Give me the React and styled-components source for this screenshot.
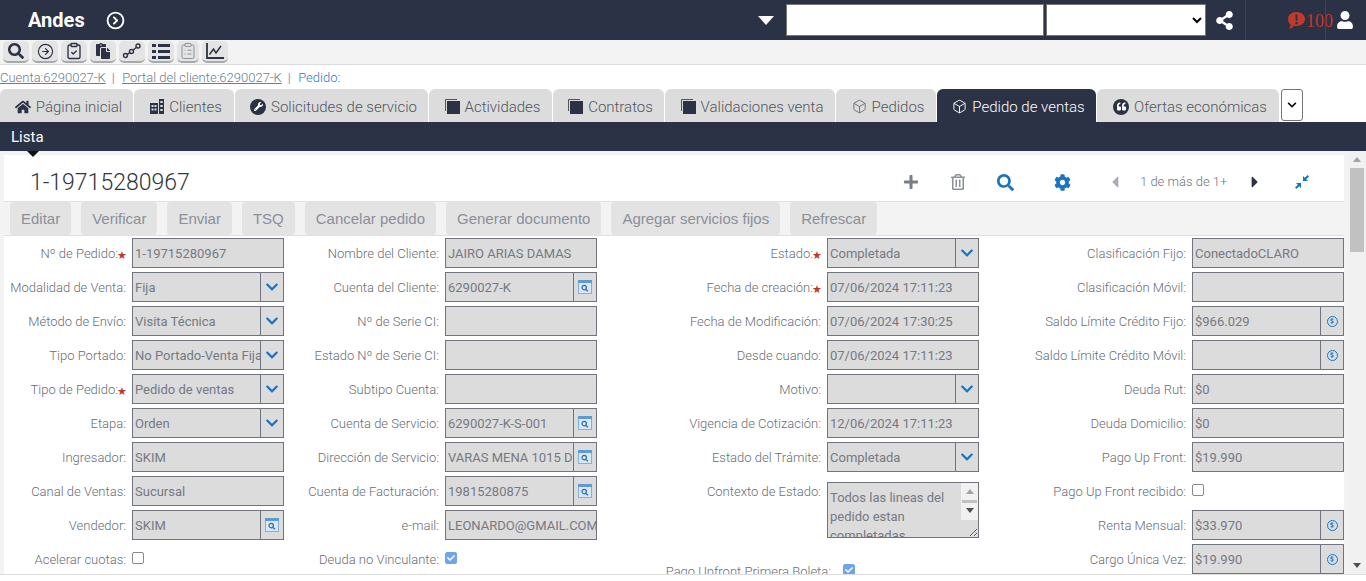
import React from 'react';
import styled, { createGlobalStyle } from 'styled-components';
import {
  FaSearch, FaPaste, FaHome, FaWrench, FaQuoteLeft, FaPlus, FaRegTrashAlt, FaCog,
  FaShareAlt, FaUser, FaCaretLeft, FaCaretRight, FaCheck, FaChevronDown, FaDollarSign,
} from 'react-icons/fa';
import { LuCircleArrowRight, LuClipboardCheck, LuClipboardList, LuBox, LuCircleChevronRight } from 'react-icons/lu';

const GlobalStyle = createGlobalStyle`
  html, body {
    margin: 0;
    padding: 0;
    height: 581px;
    overflow: hidden;
    background: #fff;
    font-family: Roboto, "Liberation Sans", sans-serif;
  }
  * { box-sizing: border-box; }
`;

const dark = '#2b3245';
const blue = '#1a74c4';

const Page = styled.div`
  width: 1366px;
  height: 581px;
  display: flex;
  flex-direction: column;
  overflow: hidden;
`;

/* top bar */
const TopBar = styled.header`
  height: 40px;
  flex: none;
  background: ${dark};
  display: flex;
  align-items: center;
  color: #fff;
`;

const Brand = styled.div`
  margin-left: 28px;
  width: 78px;
  font-size: 20px;
  font-weight: 700;
`;

const BrandGo = styled.div`
  display: flex;
  font-size: 19px;
`;

const Caret = styled.div`
  margin-left: auto;
  width: 0;
  height: 0;
  border-left: 8px solid transparent;
  border-right: 8px solid transparent;
  border-top: 9px solid #fff;
`;

const SearchBox = styled.input`
  margin-left: 12px;
  width: 258px;
  height: 32px;
  background: #fff;
  border: 1px solid #767676;
`;

const ScopeSelect = styled.select`
  margin-left: 2px;
  width: 160px;
  height: 32px;
  background: #fff;
  border: 1px solid #767676;
`;

const ShareBtn = styled.div`
  display: flex;
  margin-left: 9px;
  margin-right: 11px;
  font-size: 19px;
`;

const AlertCell = styled.div`
  width: 80px;
  height: 40px;
  flex: none;
  padding-left: 41px;
  display: flex;
  align-items: center;
  border-left: 1px solid #3f4658;
  white-space: nowrap;
  & > svg { flex: none; }
`;

const AlertCount = styled.span`
  font-family: "Liberation Serif", serif;
  font-size: 18px;
  color: #c0392b;
  padding-top: 3px;
  flex: none;
`;

const UserCell = styled.div`
  width: 41px;
  height: 40px;
  flex: none;
  padding-left: 10px;
  display: flex;
  align-items: center;
  border-left: 1px solid #3f4658;
  font-size: 18px;
`;

/* icon toolbar */
const IconBar = styled.div`
  height: 25px;
  flex: none;
  display: flex;
  gap: 3px;
  padding: 1px 0 0 3px;
  background: #f3f3f3;
  border-bottom: 1px solid #dcdcdc;
`;

const ToolBtn = styled.button`
  width: ${p => p.$w || 26}px;
  height: 22px;
  padding: 0;
  display: flex;
  align-items: center;
  justify-content: center;
  background: #e4e4e4;
  border: none;
  border-bottom: 2px solid #a9a9a9;
  border-radius: 5px;
  color: ${p => p.$color || dark};
  font-size: 16px;
`;

/* breadcrumb */
const Crumbs = styled.div`
  height: 24px;
  flex: none;
  display: flex;
  align-items: center;
  font-size: 13px;
  font-weight: 300;
  color: #6f7b8e;
`;

const Crumb = styled.a`
  color: ${p => (p.$current ? '#2f7cc4' : '#6f7b8e')};
  text-decoration: ${p => (p.$current ? 'none' : 'underline')};
`;

const Sep = styled.span`
  margin: 0 7.5px 0 6px;
  color: #3d6ea5;
`;

/* tabs */
const Tabs = styled.nav`
  height: 33px;
  flex: none;
  display: flex;
  gap: 1px;
`;

const Tab = styled.div`
  width: ${p => p.$w}px;
  display: flex;
  align-items: center;
  justify-content: center;
  gap: 5px;
  font-size: 15px;
  font-weight: 300;
  padding: 2px 0 0 4px;
  white-space: nowrap;
  background: ${p => (p.$active ? dark : '#dcdcdc')};
  color: ${p => (p.$active ? '#fff' : '#51565f')};
  border-radius: 6px 6px 0 0;
`;

const TabIcon = styled.span`
  display: flex;
  font-size: 15px;
  flex: none;
  color: ${p => (p.$active ? '#fff' : p.$muted ? '#6b7079' : dark)};
`;

const MoreTabs = styled.div`
  width: 22px;
  height: 32px;
  margin-left: 1px;
  display: flex;
  align-items: center;
  justify-content: center;
  font-size: 10px;
  color: #111;
  background: #fff;
  border: 1px solid #767676;
  border-radius: 3px;
`;

const SubBar = styled.div`
  position: relative;
  height: 29px;
  flex: none;
  padding-left: 11px;
  background: ${dark};
  color: #fff;
  font-size: 15px;
  line-height: 30px;
`;

const Pointer = styled.div`
  position: absolute;
  left: 27px;
  top: 29px;
  z-index: 2;
  border-left: 6px solid transparent;
  border-right: 6px solid transparent;
  border-top: 6px solid #111;
`;

/* work area */
const Work = styled.main`
  height: 424px;
  flex: none;
  display: flex;
  background: #f3f3f3;
  border-bottom: 1px solid #dedede;
`;

const Panel = styled.section`
  width: 1340px;
  margin: 4px 0 0 4px;
  flex: none;
  display: flex;
  flex-direction: column;
  background: #fff;
  overflow: hidden;
`;

const Scrollbar = styled.div`
  width: 18px;
  margin-left: 4px;
  flex: none;
  display: flex;
  flex-direction: column;
  align-items: center;
  background: #f1f1f1;
  padding-top: 6px;
`;

const ScrollUp = styled.div`
  flex: none;
  border-left: 4px solid transparent;
  border-right: 4px solid transparent;
  border-bottom: 5px solid #a3a3a3;
`;

const ScrollThumb = styled.div`
  flex: none;
  width: 14px;
  height: 84px;
  margin-top: 6px;
  background: #c1c1c1;
`;

const ScrollDown = styled.div`
  flex: none;
  margin-top: auto;
  margin-bottom: 6px;
  border-left: 4px solid transparent;
  border-right: 4px solid transparent;
  border-top: 5px solid #505050;
`;

const RecordHead = styled.div`
  height: 47px;
  flex: none;
  display: flex;
  align-items: center;
  padding-top: 8px;
  border-bottom: 1px solid #e0e0e0;
`;

const RecordTitle = styled.h1`
  margin: 0 0 0 26px;
  font-size: 23px;
  font-weight: 300;
  color: #30363f;
`;

const HeadTools = styled.div`
  margin-left: auto;
  display: flex;
  align-items: center;
  height: 100%;
`;

const HeadTool = styled.span`
  width: ${p => p.$w}px;
  display: flex;
  justify-content: center;
  color: ${p => p.$color};
  font-size: ${p => p.$size || 16}px;
`;

const Pager = styled.span`
  width: 87px;
  margin: 0 14px 2px 11px;
  font-size: 13px;
  font-weight: 300;
  color: #70757f;
  white-space: nowrap;
`;

const Actions = styled.div`
  height: 34px;
  flex: none;
  display: flex;
  gap: 10px;
  padding-left: 6px;
  background: #f3f3f3;
  border-bottom: 1px solid #e0e0e0;
`;

const ActionBtn = styled.button`
  height: 33px;
  padding: 0 11px;
  border: none;
  border-radius: 4px;
  background: #e3e3e3;
  color: #8b8f99;
  font-family: "Liberation Sans", sans-serif;
  font-size: 15px;
`;

const Form = styled.div`
  flex: 1;
  min-height: 0;
  display: flex;
  padding-top: 2px;
  overflow: hidden;
`;

const Column = styled.div`
  width: ${p => p.$w}px;
  flex: none;
  display: flex;
  flex-direction: column;
`;

const Field = styled.div`
  height: ${p => p.$h || 34}px;
  flex: none;
  display: flex;
  justify-content: flex-end;
  gap: ${p => p.$gap || 6}px;
  padding-top: ${p => p.$top || 0}px;
`;

const Label = styled.label`
  font-size: 13px;
  font-weight: 300;
  line-height: 31px;
  color: #686d77;
  white-space: nowrap;
`;

const Star = styled.span`
  font-size: 11px;
  color: #c0392b;
  margin: 0 -1px;
  vertical-align: -1px;
`;

const Control = styled.div`
  width: 152px;
  height: 30px;
  flex: none;
  display: flex;
  background: #dcdcdc;
  border: 1px solid #6f7480;
`;

const Value = styled.input`
  flex: 1;
  min-width: 0;
  height: 100%;
  padding: 0 0 0 2px;
  border: none;
  background: transparent;
  outline: none;
  font-family: inherit;
  font-size: 13px;
  color: #757983;
`;

const Suffix = styled.span`
  width: 23px;
  flex: none;
  display: flex;
  align-items: center;
  justify-content: center;
  border-left: 1px solid #6f7480;
  color: ${blue};
  font-size: 14px;
`;

const MoneyDot = styled.span`
  width: 11px;
  height: 11px;
  display: flex;
  align-items: center;
  justify-content: center;
  border: 1px solid ${blue};
  border-radius: 50%;
  font-size: 6px;
`;

const TextFrame = styled.div`
  position: relative;
  width: 152px;
  height: 56px;
  flex: none;
  margin-top: 6px;
`;

const TextBlock = styled.textarea`
  display: block;
  width: 152px;
  height: 56px;
  padding: 5px 19px 0 2px;
  background: #dcdcdc;
  border: 1px solid #6f7480;
  border-radius: 0;
  outline: none;
  overflow: hidden;
  resize: both;
  font-family: inherit;
  font-size: 13px;
  line-height: 19px;
  color: #757983;
`;

/* the textarea's own scrollbar, laid over its right edge */
const TextScroll = styled.div`
  position: absolute;
  top: 1px;
  right: 1px;
  width: 17px;
  height: 37px;
  display: flex;
  flex-direction: column;
  align-items: center;
  padding-top: 6px;
  background: #f1f1f1;
`;

const TextScrollThumb = styled.div`
  width: 15px;
  height: 3px;
  margin-top: 6px;
  background: #c1c1c1;
`;

const TextScrollDown = styled.div`
  margin-top: 5px;
  border-left: 4px solid transparent;
  border-right: 4px solid transparent;
  border-top: 5px solid #505050;
`;

const CheckWrap = styled.div`
  width: ${p => p.$w || 152}px;
  height: 30px;
  flex: none;
  display: flex;
  align-items: center;
  padding-bottom: 2px;
`;

const Check = styled.span`
  width: 12px;
  height: 12px;
  display: flex;
  align-items: center;
  justify-content: center;
  border-radius: 2px;
  border: 1px solid ${p => (p.$on ? '#6ea5ec' : '#8a8a8a')};
  background: ${p => (p.$on ? '#6ea5ec' : '#fff')};
  color: #fff;
  font-size: 8px;
`;

const RoundIcon = styled.span`
  width: 16px;
  height: 16px;
  display: flex;
  align-items: center;
  justify-content: center;
  border-radius: 50%;
  background: ${dark};
  color: #fff;
  font-size: 9px;
`;

const Cube = () => <LuBox size={15} strokeWidth={1.5} />;

const Stack = () => (
  <svg width="15" height="15" viewBox="0 0 15 15">
    <path d="M0.5 12V0.5H12" fill="none" stroke="#555" strokeWidth="1" />
    <rect x="2" y="2" width="13" height="13" fill={dark} />
  </svg>
);

const Building = () => (
  <svg width="14" height="15" viewBox="0 0 14 15" fill={dark}>
    <path fillRule="evenodd" d="M0 4h8v11H0zM1.500 6v2h2V6zm3 0v2h2V6zm-3 3.500v2h2v-2zm3 0v2h2v-2zM9 0h5v15H9zm1.300 2v2h2.400V2zm0 4v2h2.400V6zm0 4v2h2.400v-2z" />
  </svg>
);

const NodesIcon = () => (
  <svg width="20" height="16" viewBox="0 0 20 16" fill="none" stroke={dark} strokeWidth="1.4">
    <circle cx="3.5" cy="12.5" r="2" />
    <circle cx="9.5" cy="8.5" r="2" />
    <circle cx="16" cy="3" r="2" />
    <path d="M5.200 11.300 7.800 9.600M11 7.200 14.500 4.300" />
  </svg>
);

const ListIcon = () => (
  <svg width="18" height="15" viewBox="0 0 18 15" fill={dark}>
    <path d="M0 0h4v3H0zM6 0h12v3H6zM0 6h4v3H0zM6 6h12v3H6zM0 12h4v3H0zM6 12h12v3H6z" />
  </svg>
);

const ChartIcon = () => (
  <svg width="18" height="16" viewBox="0 0 18 16" fill="none" stroke={dark} strokeWidth="1.8">
    <path d="M1 0v15h17" />
    <path d="M3.500 11.500 7.500 6l2.500 4 5-7" strokeWidth="1.5" />
  </svg>
);

const LookupIcon = () => (
  <svg width="14" height="14" viewBox="0 0 14 14">
    <rect x="0.5" y="0.5" width="13" height="13" fill="#d8e8f6" stroke="#7fb2de" />
    <rect x="0" y="0" width="14" height="3" fill="#5c9bd3" />
    <circle cx="6.2" cy="7.6" r="2.2" fill="none" stroke="#2f6fa8" strokeWidth="1.2" />
    <path d="M8 9.400 10 11.200" stroke="#2f6fa8" strokeWidth="1.3" />
  </svg>
);

const AlertIcon = () => (
  <svg width="19" height="19" viewBox="0 0 19 19">
    <path d="M9.500 1C14.500 1 18 4 18 8s-3.500 7-8.500 7c-.8 0-1.500-.1-2.200-.2C6 16.300 4 17.500 2 18c.8-1 1.500-2.500 1.600-4.200C1.900 12.400 1 10.300 1 8c0-4 3.500-7 8.500-7z" fill="#c0392b" />
    <path d="M8.400 3.500h2.200l-.4 6.500H8.800zM8.400 11h2.200v2.200H8.400z" fill={dark} />
  </svg>
);

const CompressIcon = () => (
  <svg width="14" height="14" viewBox="0 0 14 14" fill={blue}>
    <path d="M8 6V1l1.800 1.800L12.600 0 14 1.400l-2.800 2.800L13 6zM6 8v5l-1.800-1.800L1.400 14 0 12.600l2.800-2.800L1 8z" />
  </svg>
);

const toolButtons = [
  { icon: <FaSearch /> },
  { icon: <LuCircleArrowRight size={17} strokeWidth={1.6} /> },
  { icon: <LuClipboardCheck size={18} strokeWidth={1.8} /> },
  { icon: <FaPaste /> },
  { icon: <NodesIcon /> },
  { icon: <ListIcon /> },
  { icon: <LuClipboardList size={18} strokeWidth={1.3} />, w: 22, color: '#8a8f98' },
  { icon: <ChartIcon /> },
];

const tabs = [
  { label: 'Página inicial', w: 133, icon: <FaHome size={16} /> },
  { label: 'Clientes', w: 100, icon: <Building /> },
  { label: 'Solicitudes de servicio', w: 193, icon: <RoundIcon><FaWrench /></RoundIcon> },
  { label: 'Actividades', w: 123, icon: <Stack /> },
  { label: 'Contratos', w: 111, icon: <Stack /> },
  { label: 'Validaciones venta', w: 170, icon: <Stack /> },
  { label: 'Pedidos', w: 100, icon: <Cube />, muted: true },
  { label: 'Pedido de ventas', w: 159, icon: <Cube />, active: true },
  { label: 'Ofertas económicas', w: 182, icon: <RoundIcon><FaQuoteLeft /></RoundIcon> },
];

const actions = ['Editar', 'Verificar', 'Enviar', 'TSQ', 'Cancelar pedido', 'Generar documento', 'Agregar servicios fijos', 'Refrescar'];

const columns = [
  {
    w: 280,
    fields: [
      { label: 'Nº de Pedido:', value: '1-19715280967', required: true },
      { label: 'Modalidad de Venta:', value: 'Fija', kind: 'select' },
      { label: 'Método de Envío:', value: 'Visita Técnica', kind: 'select' },
      { label: 'Tipo Portado:', value: 'No Portado-Venta Fija', kind: 'select' },
      { label: 'Tipo de Pedido:', value: 'Pedido de ventas', kind: 'select', required: true },
      { label: 'Etapa:', value: 'Orden', kind: 'select' },
      { label: 'Ingresador:', value: 'SKIM' },
      { label: 'Canal de Ventas:', value: 'Sucursal' },
      { label: 'Vendedor:', value: 'SKIM', kind: 'lookup' },
      { label: 'Acelerar cuotas:', kind: 'check' },
    ],
  },
  {
    w: 313,
    fields: [
      { label: 'Nombre del Cliente:', value: 'JAIRO ARIAS DAMAS' },
      { label: 'Cuenta del Cliente:', value: '6290027-K', kind: 'lookup' },
      { label: 'Nº de Serie CI:', value: '' },
      { label: 'Estado Nº de Serie CI:', value: '' },
      { label: 'Subtipo Cuenta:', value: '' },
      { label: 'Cuenta de Servicio:', value: '6290027-K-S-001', kind: 'lookup' },
      { label: 'Dirección de Servicio:', value: 'VARAS MENA 1015 DEPTO', kind: 'lookup' },
      { label: 'Cuenta de Facturación:', value: '19815280875', kind: 'lookup' },
      { label: 'e-mail:', value: 'LEONARDO@GMAIL.COM' },
      { label: 'Deuda no Vinculante:', kind: 'check', on: true },
    ],
  },
  {
    w: 382,
    fields: [
      { label: 'Estado:', value: 'Completada', kind: 'select', required: true },
      { label: 'Fecha de creación:', value: '07/06/2024 17:11:23', required: true },
      { label: 'Fecha de Modificación:', value: '07/06/2024 17:30:25' },
      { label: 'Desde cuando:', value: '07/06/2024 17:11:23' },
      { label: 'Motivo:', value: '', kind: 'select' },
      { label: 'Vigencia de Cotización:', value: '12/06/2024 17:11:23' },
      { label: 'Estado del Trámite:', value: 'Completada', kind: 'select' },
      { label: 'Contexto de Estado:', value: 'Todos las lineas del pedido estan completadas', kind: 'text' },
      { label: 'Pago Upfront Primera Boleta:', kind: 'check', on: true, wide: true },
    ],
  },
  {
    w: 365,
    fields: [
      { label: 'Clasificación Fijo:', value: 'ConectadoCLARO' },
      { label: 'Clasificación Móvil:', value: '' },
      { label: 'Saldo Límite Crédito Fijo:', value: '$966.029', kind: 'money' },
      { label: 'Saldo Límite Crédito Móvil:', value: '', kind: 'money' },
      { label: 'Deuda Rut:', value: '$0' },
      { label: 'Deuda Domicilio:', value: '$0' },
      { label: 'Pago Up Front:', value: '$19.990' },
      { label: 'Pago Up Front recibido:', kind: 'check' },
      { label: 'Renta Mensual:', value: '$33.970', kind: 'money' },
      { label: 'Cargo Única Vez:', value: '$19.990', kind: 'money' },
    ],
  },
];

const FieldLabel = ({ field }) => (
  <Label>
    {field.label}
    {field.required && <Star>★</Star>}
  </Label>
);

const suffixFor = (kind) => {
  if (kind === 'select') return <FaChevronDown />;
  if (kind === 'lookup') return <LookupIcon />;
  if (kind === 'money') return <MoneyDot><FaDollarSign /></MoneyDot>;
  return null;
};

const FormField = ({ field }) => {
  if (field.kind === 'text') {
    return (
      <Field $h={68}>
        <FieldLabel field={field} />
        <TextFrame>
          <TextBlock readOnly defaultValue={field.value} />
          <TextScroll>
            <ScrollUp />
            <TextScrollThumb />
            <TextScrollDown />
          </TextScroll>
        </TextFrame>
      </Field>
    );
  }
  if (field.kind === 'check') {
    return (
      <Field $gap={field.wide ? 12 : 6} $top={field.wide ? 12 : 0} $h={field.wide ? 46 : 34}>
        <FieldLabel field={field} />
        <CheckWrap $w={field.wide ? 136 : 152}>
          <Check $on={field.on}>{field.on && <FaCheck />}</Check>
        </CheckWrap>
      </Field>
    );
  }
  const suffix = suffixFor(field.kind);
  return (
    <Field>
      <FieldLabel field={field} />
      <Control>
        <Value readOnly defaultValue={field.value} />
        {suffix && <Suffix>{suffix}</Suffix>}
      </Control>
    </Field>
  );
};

const App = () => (
  <Page>
    <GlobalStyle />
    <TopBar>
      <Brand>Andes</Brand>
      <BrandGo><LuCircleChevronRight size={19} strokeWidth={2.4} /></BrandGo>
      <Caret />
      <SearchBox />
      <ScopeSelect><option /></ScopeSelect>
      <ShareBtn><FaShareAlt /></ShareBtn>
      <AlertCell>
        <AlertIcon />
        <AlertCount>100</AlertCount>
      </AlertCell>
      <UserCell><FaUser /></UserCell>
    </TopBar>

    <IconBar>
      {toolButtons.map((b, i) => (
        <ToolBtn key={i} $w={b.w} $color={b.color}>{b.icon}</ToolBtn>
      ))}
    </IconBar>

    <Crumbs>
      <Crumb>Cuenta:6290027-K</Crumb>
      <Sep>|</Sep>
      <Crumb>Portal del cliente:6290027-K</Crumb>
      <Sep>|</Sep>
      <Crumb $current>Pedido:</Crumb>
    </Crumbs>

    <Tabs>
      {tabs.map(t => (
        <Tab key={t.label} $w={t.w} $active={t.active}>
          <TabIcon $active={t.active} $muted={t.muted}>{t.icon}</TabIcon>
          {t.label}
        </Tab>
      ))}
      <MoreTabs><FaChevronDown /></MoreTabs>
    </Tabs>

    <SubBar>
      Lista
      <Pointer />
    </SubBar>

    <Work>
      <Panel>
        <RecordHead>
          <RecordTitle>1-19715280967</RecordTitle>
          <HeadTools>
            <HeadTool $w={36} $color="#777d88" $size={16}><FaPlus /></HeadTool>
            <HeadTool $w={58} $color="#8a8f98" $size={16}><FaRegTrashAlt /></HeadTool>
            <HeadTool $w={36} $color={blue} $size={17}><FaSearch /></HeadTool>
            <HeadTool $w={78} $color={blue} $size={17}><FaCog /></HeadTool>
            <HeadTool $w={28} $color="#a9adb4" $size={18}><FaCaretLeft /></HeadTool>
            <Pager>1 de más de 1+</Pager>
            <HeadTool $w={28} $color={dark} $size={18}><FaCaretRight /></HeadTool>
            <HeadTool $w={66} $color={blue}><CompressIcon /></HeadTool>
            <HeadTool $w={9} />
          </HeadTools>
        </RecordHead>
        <Actions>
          {actions.map(a => <ActionBtn key={a}>{a}</ActionBtn>)}
        </Actions>
        <Form>
          {columns.map((c, i) => (
            <Column key={i} $w={c.w}>
              {c.fields.map(f => <FormField key={f.label} field={f} />)}
            </Column>
          ))}
        </Form>
      </Panel>
      <Scrollbar>
        <ScrollUp />
        <ScrollThumb />
        <ScrollDown />
      </Scrollbar>
    </Work>
  </Page>
);

export default App;
